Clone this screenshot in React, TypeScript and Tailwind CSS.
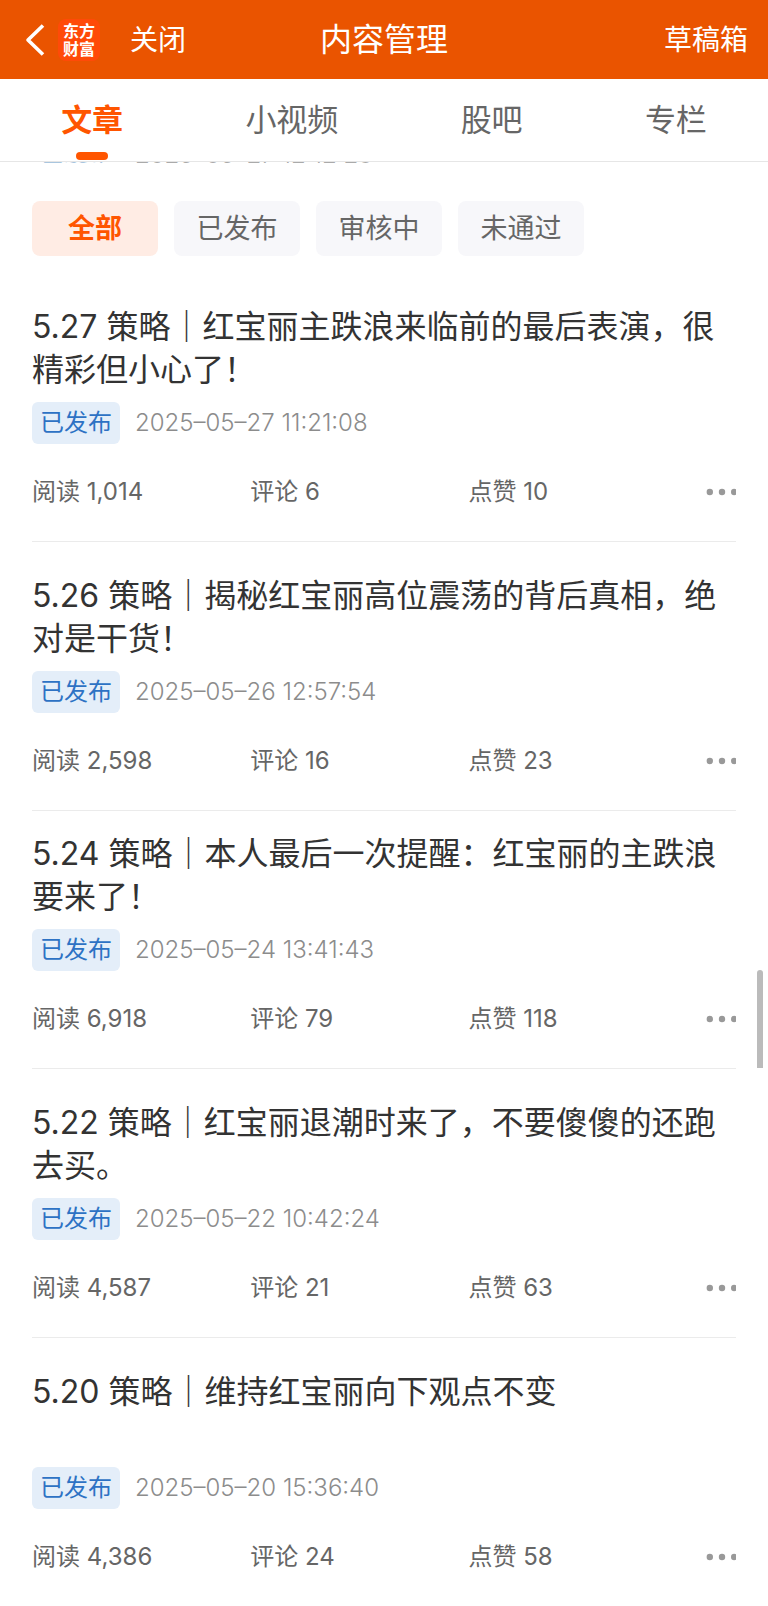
import React, { useState } from 'react';

interface Article {
    id: number;
    title: string;
    date: string;
    reads: string;
    comments: number;
    likes: number;
    compact?: boolean;
}

const articles: Article[] = [
    { id: 1, title: '5.27 策略｜红宝丽主跌浪来临前的最后表演，很精彩但小心了！', date: '2025–05–27 11:21:08', reads: '1,014', comments: 6, likes: 10 },
    { id: 2, title: '5.26 策略｜揭秘红宝丽高位震荡的背后真相，绝对是干货！', date: '2025–05–26 12:57:54', reads: '2,598', comments: 16, likes: 23 },
    { id: 3, title: '5.24 策略｜本人最后一次提醒：红宝丽的主跌浪要来了！', date: '2025–05–24 13:41:43', reads: '6,918', comments: 79, likes: 118, compact: true },
    { id: 4, title: '5.22 策略｜红宝丽退潮时来了，不要傻傻的还跑去买。', date: '2025–05–22 10:42:24', reads: '4,587', comments: 21, likes: 63 },
    { id: 5, title: '5.20 策略｜维持红宝丽向下观点不变', date: '2025–05–20 15:36:40', reads: '4,386', comments: 24, likes: 58 },
];

const tabs = ['文章', '小视频', '股吧', '专栏'];
const filters = ['全部', '已发布', '审核中', '未通过'];

const Header = () => (
    <header className="grid h-[79px] grid-cols-[1fr_auto_1fr] items-center bg-[#ea5400] px-5 text-white">
        <div className="flex items-center">
            <button aria-label="返回" className="ml-1 mr-3">
                <svg width="22" height="32" viewBox="0 0 22 32" fill="none" stroke="currentColor" strokeWidth="3.600" strokeLinejoin="round">
                    <path d="M19 1.500 4 16 19 30.500" />
                </svg>
            </button>
            <div className="flex h-[42px] w-[42px] items-center justify-center rounded-lg bg-[#ff4a08]">
                <p className="w-8 break-all text-base font-bold leading-[18px]">东方财富</p>
            </div>
            <button className="ml-[30px] text-[28px] leading-10">关闭</button>
        </div>
        <h1 className="text-[32px] leading-10">内容管理</h1>
        <button className="justify-self-end text-[28px] leading-10">草稿箱</button>
    </header>
);

const ArticleItem = ({ article, last }: { article: Article; last: boolean }) => (
    <li className={`${article.compact ? 'pt-[21px]' : 'pt-8'} ${last ? '' : 'border-b border-[#ebebeb]'}`}>
        <h2 className="min-h-[86px] text-[32px] leading-[43px] text-[#333]">{article.title}</h2>
        <div className="mt-[11px] flex items-center gap-[15px]">
            <span className="rounded-md bg-[#e4eef9] px-2 text-[24px] leading-[42px] text-[#2d72c4]">已发布</span>
            <time className="text-[24px] font-light leading-[42px] text-[#8c8c8c]">{article.date}</time>
        </div>
        <div className="mb-8 mt-[31px] grid grid-cols-[31%_31%_31%_1fr] items-center text-[24px] leading-[34px] text-[#666]">
            <span>阅读 {article.reads}</span>
            <span>评论 {article.comments}</span>
            <span>点赞 {article.likes}</span>
            <button aria-label="更多" className="justify-self-end">
                <svg width="30" height="8" viewBox="0 0 30 8" fill="#999">
                    <circle cx="3.800" cy="4" r="3.200" />
                    <circle cx="16" cy="4" r="3.200" />
                    <circle cx="28.200" cy="4" r="3.200" />
                </svg>
            </button>
        </div>
    </li>
);

const App = () => {
    const [activeTab, setActiveTab] = useState('文章');
    const [activeFilter, setActiveFilter] = useState('全部');

    return (
        <div className="relative min-h-screen bg-white font-[Inter,'Noto_Sans_CJK_SC',sans-serif]">
            <Header />

            {/* Tabs */}
            <nav className="flex h-[83px] justify-around border-b border-[#e6e6e6]">
                {tabs.map(tab => (
                    <button
                        key={tab}
                        onClick={() => setActiveTab(tab)}
                        className={`flex flex-col items-center justify-end text-[31px] leading-10 ${tab === activeTab ? 'font-bold text-[#ff5500]' : 'text-[#666]'}`}
                    >
                        {tab}
                        <span className={`mb-px mt-3 h-2 w-8 rounded-full ${tab === activeTab ? 'bg-[#ff5500]' : ''}`} />
                    </button>
                ))}
            </nav>

            {/* Row scrolled under the tabs, only its lower edge shows */}
            <div className="flex h-px items-end gap-[15px] overflow-hidden px-8 text-[24px]">
                <span className="px-2 leading-[18px] text-[#a9c6df]">已发布</span>
                <time className="font-light leading-4 text-[#aaa]">2025–05–27 12:12:23</time>
            </div>

            <main className="px-8">
                {/* Filters */}
                <div className="flex gap-4 pt-[38px]">
                    {filters.map(filter => (
                        <button
                            key={filter}
                            onClick={() => setActiveFilter(filter)}
                            className={`h-[55px] w-[126px] rounded-lg pt-0.5 text-[27px] ${filter === activeFilter ? 'bg-[#ffece4] font-bold text-[#ff5500]' : 'bg-[#f7f7fa] text-[#666]'}`}
                        >
                            {filter}
                        </button>
                    ))}
                </div>

                <ul className="mt-[17px]">
                    {articles.map((article, index) => (
                        <ArticleItem key={article.id} article={article} last={index === articles.length - 1} />
                    ))}
                </ul>
            </main>

            {/* Scroll thumb */}
            <div className="absolute right-[5px] top-[970px] h-[98px] w-[6px] rounded-t-full bg-[#bbb]" />
        </div>
    );
};

export default App;
